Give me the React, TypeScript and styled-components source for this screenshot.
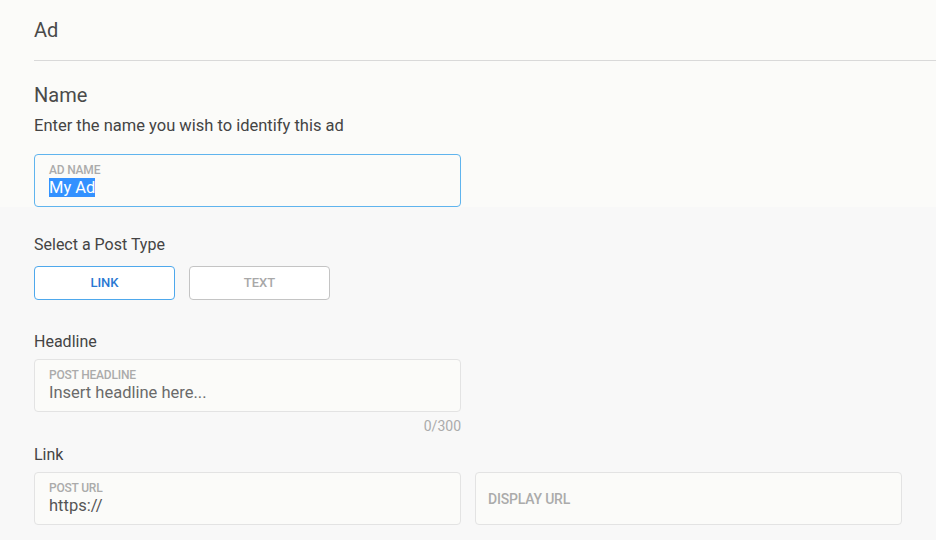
import React from 'react';
import styled, { createGlobalStyle } from 'styled-components';

const GlobalStyle = createGlobalStyle`
  html, body {
    margin: 0;
    padding: 0;
    background: #f8f8f8;
    font-family: Roboto, "Liberation Sans", Arial, sans-serif;
    color: #4a4a4a;
  }
`;

const Page = styled.div`
  min-height: 540px;
  background: #f8f8f8;
`;

const TopBand = styled.div`
  background: #fbfbf9;
  padding-left: 34px;
`;

const Header = styled.div`
  height: 60px;
  display: flex;
  align-items: center;
  font-size: 20px;
  border-bottom: 1px solid #d9d9d9;
`;

const Body = styled.div`
  padding-left: 34px;
  width: 868px;
`;

const SectionTitle = styled.div`
  margin-top: 22px;
  font-size: 20px;
  line-height: 24px;
`;

const Hint = styled.div`
  margin-top: 9px;
  font-size: 16.5px;
  line-height: 20px;
  color: #444;
`;

const Label = styled.div<{ $top: number }>`
  margin-top: ${p => p.$top}px;
  font-size: 16px;
  line-height: 20px;
  color: #444;
`;

const Field = styled.div<{ $focused?: boolean; $top?: number; $center?: boolean }>`
  box-sizing: border-box;
  width: 427px;
  height: 53px;
  margin-top: ${p => p.$top ?? 0}px;
  padding: ${p => (p.$center ? '0 12px' : '9px 14px 0')};
  border: 1px solid ${p => (p.$focused ? '#5fb4ee' : '#e3e3e3')};
  border-radius: 4px;
  background: #fbfbf9;
  display: flex;
  flex-direction: column;
  justify-content: ${p => (p.$center ? 'center' : 'flex-start')};
`;

const FieldLabel = styled.div<{ $large?: boolean }>`
  font-size: ${p => (p.$large ? '14px' : '12px')};
  line-height: ${p => (p.$large ? '16px' : '12px')};
  font-weight: 500;
  color: #ababab;
  letter-spacing: -0.2px;
  text-transform: uppercase;
`;

const FieldValue = styled.div<{ $placeholder?: boolean }>`
  margin-top: 1px;
  font-size: 16.5px;
  line-height: 22px;
  color: ${p => (p.$placeholder ? '#6a6a6a' : '#555')};
`;

const Selected = styled.span`
  background: #3391ff;
  color: #fff;
`;

const TypeRow = styled.div`
  display: flex;
  gap: 14px;
  margin-top: 11px;
`;

const TypeButton = styled.button<{ $active?: boolean }>`
  box-sizing: border-box;
  width: 141px;
  height: 34px;
  padding: 0 0 1px;
  border: 1px solid ${p => (p.$active ? '#4ea8ec' : '#c4c4c4')};
  border-radius: 4px;
  background: #fff;
  color: ${p => (p.$active ? '#2a78d2' : '#a8a8a8')};
  font-family: Roboto, "Liberation Sans", Arial, sans-serif;
  font-size: 13px;
  font-weight: 500;
  cursor: pointer;
`;

const Counter = styled.div`
  width: 427px;
  margin-top: 6px;
  text-align: right;
  font-size: 14px;
  line-height: 16px;
  color: #ababab;
`;

const FieldRow = styled.div`
  display: flex;
  gap: 14px;
  margin-top: 7px;
`;

export default function App() {
  return (
    <Page>
      <GlobalStyle />
      <TopBand>
        <Header>Ad</Header>
        <SectionTitle>Name</SectionTitle>
        <Hint>Enter the name you wish to identify this ad</Hint>
        <Field $focused $top={18}>
          <FieldLabel>Ad Name</FieldLabel>
          <FieldValue>
            <Selected>My Ad</Selected>
          </FieldValue>
        </Field>
      </TopBand>
      <Body>
        <Label $top={28}>Select a Post Type</Label>
        <TypeRow>
          <TypeButton $active>LINK</TypeButton>
          <TypeButton>TEXT</TypeButton>
        </TypeRow>
        <Label $top={32}>Headline</Label>
        <Field $top={7}>
          <FieldLabel>Post Headline</FieldLabel>
          <FieldValue $placeholder>Insert headline here...</FieldValue>
        </Field>
        <Counter>0/300</Counter>
        <Label $top={11}>Link</Label>
        <FieldRow>
          <Field>
            <FieldLabel>Post URL</FieldLabel>
            <FieldValue>https://</FieldValue>
          </Field>
          <Field $center>
            <FieldLabel $large>Display URL</FieldLabel>
          </Field>
        </FieldRow>
      </Body>
    </Page>
  );
}
